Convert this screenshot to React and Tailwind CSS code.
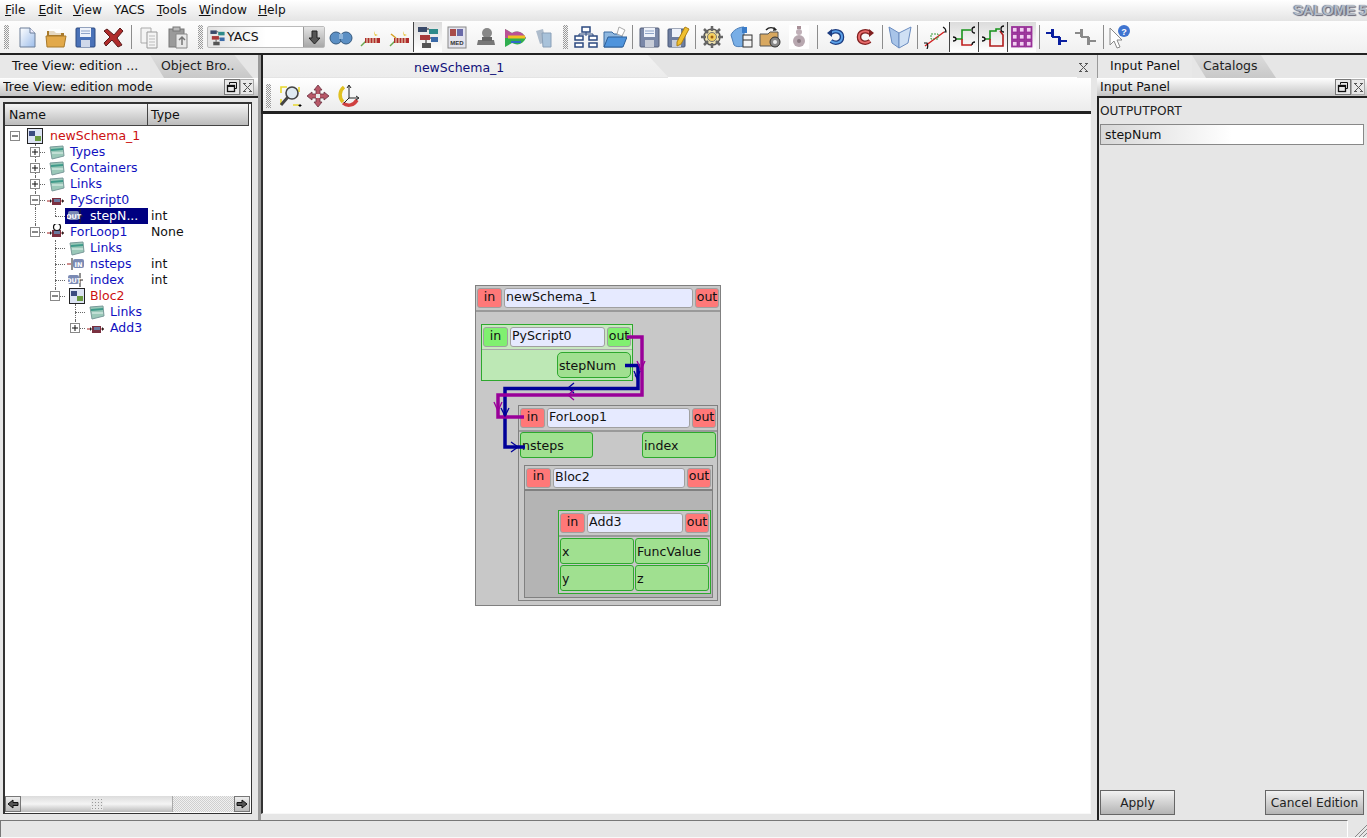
import React from "react";

// ---- toolbar icons, all drawn on a 24x24 box ----
const Svg = ({ children, size = 24 }) => (
  <svg width={size} height={size} viewBox="0 0 24 24" fill="none">
    {children}
  </svg>
);

const NewDoc = () => (
  <Svg>
    <defs>
      <linearGradient id="nd" x1="0" y1="0" x2="1" y2="1">
        <stop offset="0" stopColor="#ffffff" />
        <stop offset="1" stopColor="#9dbdea" />
      </linearGradient>
    </defs>
    <path d="M5 3h10l5 5v14H5z" fill="url(#nd)" stroke="#6d7f99" />
    <path d="M15 3v5h5" fill="#eef" stroke="#6d7f99" />
  </Svg>
);
const OpenFolder = () => (
  <Svg>
    <path d="M3 6h7l2 2h8v3H3z" fill="#a87a2c" />
    <path d="M2 11h20l-2 11H3z" fill="#e2a94a" stroke="#a87a2c" />
    <path d="M5 4h12v6H5z" fill="#fff" opacity=".7" />
  </Svg>
);
const SaveDisk = ({ dim }) => (
  <Svg>
    <rect x="3" y="3" width="19" height="19" rx="1" fill={dim ? "#7a88a8" : "#4a72b8"} stroke={dim ? "#555f78" : "#2c4a80"} />
    <rect x="7" y="3" width="11" height="9" fill="#eef2fa" />
    <path d="M8 6h9M8 8.5h9" stroke="#8fa4c8" />
    <rect x="8" y="15" width="9" height="7" fill={dim ? "#c8cdd8" : "#cfd8ea"} />
  </Svg>
);
const CloseX = () => (
  <Svg>
    <path d="M5 4l7 6 6-7 3 3-6 7 5 7-4 2-6-7-6 6-2-3 6-6-6-6z" fill="#b02c2c" stroke="#5a1c1c" />
  </Svg>
);
const CopyDocs = () => (
  <Svg>
    <path d="M4 3h10v15H4z" fill="#f4f4f4" stroke="#aaa" />
    <path d="M10 7h10v16H10z" fill="#f4f4f4" stroke="#999" />
    <path d="M12 11h6M12 14h6M12 17h6M12 20h6" stroke="#bbb" />
  </Svg>
);
const PasteDocs = () => (
  <Svg>
    <rect x="3" y="4" width="15" height="18" fill="#9a9a9a" stroke="#777" />
    <rect x="7" y="2" width="7" height="4" fill="#bbb" stroke="#777" />
    <path d="M10 9h11v14H10z" fill="#e8e8e8" stroke="#888" />
    <path d="M13 15l3-3 3 3M16 12v8" stroke="#777" strokeWidth="1.5" />
  </Svg>
);
const YacsIcon = ({ size = 24 }) => (
  <Svg size={size}>
    <rect x="2" y="2" width="9" height="5" fill="#3a4a6a" />
    <rect x="13" y="4" width="9" height="5" fill="#2e8a8a" />
    <rect x="4" y="10" width="10" height="5" fill="#a83a3a" />
    <rect x="15" y="12" width="7" height="5" fill="#3a6aa8" />
    <rect x="6" y="18" width="9" height="5" fill="#555" />
    <path d="M11 4h2M14 13h1M10 15v3" stroke="#222" />
  </Svg>
);
const Binoculars = () => (
  <Svg>
    <circle cx="7" cy="13" r="6" fill="#5b8fc4" stroke="#34597f" />
    <circle cx="17" cy="13" r="6" fill="#5b8fc4" stroke="#34597f" />
    <rect x="10" y="9" width="4" height="5" fill="#8fb5da" />
  </Svg>
);
const Wand = ({ dim }) => (
  <Svg>
    <path d="M3 21L9 15" stroke="#6aa84f" strokeWidth="1.5" />
    <path d="M7 13h15v5H7z" fill="#b02c2c" />
    <path d="M9 13v5M12 13v5M15 13v5M18 13v5" stroke="#eec" />
    <path d="M16 6l1 3 3 1-3 1-1-3z" fill="#e8c640" />
    {dim && <path d="M4 9l5 4" stroke="#d4a020" strokeWidth="1.5" />}
  </Svg>
);
const MedBook = () => (
  <Svg>
    <rect x="3" y="2" width="18" height="21" fill="#e4e4ee" stroke="#888" />
    <rect x="5" y="4" width="6" height="7" fill="#a84a4a" />
    <rect x="12" y="4" width="6" height="7" fill="#6a6aa8" />
    <text x="12" y="20" fontSize="6" fontFamily="Liberation Sans, sans-serif" textAnchor="middle" fill="#333" fontWeight="700">MED</text>
  </Svg>
);
const Stamp = () => (
  <Svg>
    <circle cx="13" cy="8" r="5" fill="#888" />
    <path d="M4 15h16l1 5H3z" fill="#777" />
    <path d="M8 12h10v4H8z" fill="#666" />
  </Svg>
);
const ColorFish = () => (
  <Svg>
    <path d="M2 4l7 4c6-3 11-1 14 5-3 6-8 8-14 5l-7 4z" fill="#2fae4f" />
    <path d="M2 4l7 4c6-3 11-1 14 5H2z" fill="#dd3aa8" opacity=".8" />
    <path d="M5 12h17" stroke="#f0c020" strokeWidth="3" />
    <path d="M8 17h10" stroke="#2f6ac8" strokeWidth="2" />
  </Svg>
);
const Cards = () => (
  <Svg>
    <path d="M4 6l7-2 3 13-6 2z" fill="#aebccc" />
    <path d="M10 8h9v14h-8z" fill="#a8c2da" stroke="#8aa0b8" />
  </Svg>
);
const TreeNet = () => (
  <Svg>
    <rect x="8" y="2" width="8" height="5" fill="#fff" stroke="#2c4a80" strokeWidth="1.5" />
    <rect x="1" y="11" width="8" height="4" fill="#fff" stroke="#2c4a80" strokeWidth="1.5" />
    <rect x="15" y="11" width="8" height="4" fill="#fff" stroke="#2c4a80" strokeWidth="1.5" />
    <rect x="1" y="18" width="8" height="4" fill="#fff" stroke="#2c4a80" strokeWidth="1.5" />
    <rect x="15" y="18" width="8" height="4" fill="#fff" stroke="#2c4a80" strokeWidth="1.5" />
    <path d="M12 7v4M5 9h14v2M5 9v2" stroke="#2c4a80" />
  </Svg>
);
const BlueFolder = () => (
  <Svg>
    <path d="M1 7h8l2 2h8v13H1z" fill="#8fb8e0" stroke="#3a6aa0" />
    <path d="M16 2l6 3-3 6-5-2z" fill="#fff" stroke="#aaa" />
    <path d="M5 12h19l-4 10H1z" fill="#4f94dc" stroke="#2c5f98" />
  </Svg>
);
const SaveDiskBody = () => (
  <>
    <rect x="2" y="4" width="17" height="18" rx="1" fill="#6e7ea0" stroke="#485878" />
    <rect x="6" y="4" width="9" height="8" fill="#eef2fa" />
    <rect x="6" y="15" width="9" height="7" fill="#c8cdd8" />
  </>
);
const SavePen = () => (
  <Svg>
    <SaveDiskBody />
    <path d="M19 2l4 2-8 15-4 2 0-4z" fill="#f0c030" stroke="#b08010" />
  </Svg>
);
const Gear = () => (
  <Svg>
    <circle cx="12" cy="12" r="8" fill="#f0e4b0" stroke="#555" strokeWidth="1.5" />
    <path d="M12 1v5M12 18v5M1 12h5M18 12h5M4 4l4 4M16 16l4 4M20 4l-4 4M8 16l-4 4" stroke="#666" strokeWidth="2.5" />
    <circle cx="12" cy="12" r="4.5" fill="#f4d060" stroke="#777" />
    <circle cx="12" cy="12" r="1.5" fill="#a06010" />
  </Svg>
);
const BlueWindow = () => (
  <Svg>
    <path d="M2 10c2-5 8-8 13-8v19c-5 1-8 1-10-1z" fill="#78aee6" stroke="#4d7fb8" />
    <rect x="13" y="2" width="5" height="6" fill="#3a7cc8" />
    <rect x="14" y="10" width="9" height="12" fill="#f4f4f4" stroke="#333" />
    <path d="M14 15h9" stroke="#333" />
  </Svg>
);
const FolderGear = () => (
  <Svg>
    <path d="M2 9h8l2-2h8v14H2z" fill="#d8a860" stroke="#555" />
    <path d="M8 5c3-3 7-3 10 0" stroke="#222" strokeWidth="1.5" />
    <path d="M16 2l3 3-4 1z" fill="#222" />
    <circle cx="17" cy="17" r="5" fill="#888" stroke="#333" />
    <circle cx="17" cy="17" r="2" fill="#eee" />
  </Svg>
);
const Bottle = () => (
  <Svg>
    <rect x="2" y="0" width="20" height="24" fill="#fff" />
    <circle cx="12" cy="16" r="6" fill="#b8a8b0" />
    <circle cx="12" cy="7" r="3" fill="#c0b0b8" />
    <rect x="10" y="1" width="4" height="3" fill="#a89098" />
    <circle cx="12" cy="16" r="2" fill="#8a7a82" />
  </Svg>
);
const UndoIcon = () => (
  <Svg>
    <path d="M7 8c4-3 11-2 11 4s-7 7-11 4" stroke="#1c3c80" strokeWidth="4.500" />
    <path d="M7 8c4-3 11-2 11 4s-7 7-11 4" stroke="#5aa0e8" strokeWidth="2" />
    <path d="M3 8l5-4v8z" fill="#1c3c80" />
  </Svg>
);
const RedoIcon = () => (
  <Svg>
    <path d="M17 8c-4-3-11-2-11 4s7 7 11 4" stroke="#802020" strokeWidth="4.500" />
    <path d="M17 8c-4-3-11-2-11 4s7 7 11 4" stroke="#e86a6a" strokeWidth="2" />
    <path d="M21 8l-5-4v8z" fill="#802020" />
  </Svg>
);
const BookIcon = () => (
  <Svg>
    <path d="M1 2l10 6v15L4 18z" fill="#a8c4e8" stroke="#6a8cc0" />
    <path d="M23 2l-12 6v15l9-5z" fill="#cfe0f4" stroke="#6a8cc0" />
  </Svg>
);
const Straight = () => (
  <Svg>
    <path d="M2 21L21 7" stroke="#d02020" strokeWidth="1.5" />
    <path d="M8 9h7v5H8z" stroke="#3a9a3a" strokeDasharray="2 1" />
    <path d="M1 18h3c1 2 1 4 0 6M20 2c2 1 3 3 3 5h-2" stroke="#111" strokeWidth="1.2" />
  </Svg>
);
const Ortho = () => (
  <Svg>
    <path d="M4 14h6V5h9" stroke="#18931c" strokeWidth="1.6" />
    <path d="M10 14v6h10" stroke="#c02020" strokeWidth="1.6" />
    <path d="M1 12c2 0 3 1 3 2s-1 2-3 2M23 2c-2 0-3 1-3 3s1 3 3 3M23 17c-2 0-3 1-3 3" stroke="#111" strokeWidth="1.3" />
  </Svg>
);
const OrthoBig = () => (
  <Svg>
    <path d="M4 14h5V6h6v-2h4" stroke="#18931c" strokeWidth="1.6" />
    <path d="M9 14v7h13V10l-3-4" stroke="#b01c1c" strokeWidth="1.6" />
    <path d="M1 12c2 0 3 1 3 2s-1 2-3 2M23 1c-2 0-3 1-3 3s1 3 3 3" stroke="#111" strokeWidth="1.3" />
  </Svg>
);
const GridIcon = () => (
  <Svg>
    {[2, 9, 16].map((y) =>
      [2, 9, 16].map((x) => (
        <rect key={`${x}-${y}`} x={x} y={y} width="5.5" height="5.5" fill="#f0d0f0" stroke="#983098" strokeWidth="1.8" />
      ))
    )}
  </Svg>
);
const LinkStep = ({ color }) => (
  <Svg>
    <path d="M1 8h7v4h6v4h8" stroke={color} strokeWidth="2" />
    <path d="M6 4h3v8H6zM13 12h3v8h-3z" fill={color} />
  </Svg>
);
const HelpArrow = () => (
  <Svg>
    <path d="M2 3v17l4-4 3 7 3-1-3-7h5z" fill="#fff" stroke="#888" />
    <circle cx="16" cy="6" r="6" fill="#3f74d0" />
    <text x="16" y="9.5" fontSize="9" fontWeight="700" fontFamily="Liberation Sans, sans-serif" textAnchor="middle" fill="#fff">?</text>
  </Svg>
);
const ZoomGlass = () => (
  <Svg>
    <path d="M3 9V3h6M3 15v6M21 3v5M21 21h-6" stroke="#e8d830" strokeWidth="1.6" />
    <circle cx="14" cy="9" r="6" fill="#dfeaf2" stroke="#444" strokeWidth="1.6" />
    <path d="M10 13l-7 8" stroke="#444" strokeWidth="3" />
    <path d="M22 20v3M20.5 21.5h3" stroke="#000" />
  </Svg>
);
const PanCross = () => (
  <Svg>
    <path d="M11 1l4 5h-2v4h4V8l5 4-5 4v-2h-4v4h2l-4 5-4-5h2v-4H5v2l-5-4 5-4v2h4V6H7z" fill="#b85868" stroke="#6a3040" strokeWidth=".8" />
    <rect x="9" y="10" width="4" height="4" fill="#e8e8e8" />
  </Svg>
);
const RotateIcon = () => (
  <Svg>
    <path d="M8 3C3 7 3 14 7 18" stroke="#e0c020" strokeWidth="3.500" />
    <path d="M7 19c5 4 11 2 14-3" stroke="#d04040" strokeWidth="3.500" />
    <path d="M13 2v12h9M13 14l-5 5" stroke="#222" />
    <path d="M11 4l2-3 2 3M20 12l3 2-3 2" stroke="#222" />
  </Svg>
);

// ---- toolbar pieces ----
const Grip = ({ className = "" }) => (
  <div className={`w-[5px] h-[24px] bg-[repeating-conic-gradient(#9a9a9a_0_25%,#f4f4f4_0_50%)] bg-[length:2px_2px] ${className}`} />
);

const Sep = ({ className = "" }) => <div className={`w-px h-[24px] bg-[#8c8c8c] ${className}`} />;

const Tool = ({ on, children }) => (
  <div
    className={`w-[29px] h-[30px] flex items-center justify-center shrink-0 ${
      on ? "border-l border-[#444] bg-linear-to-b from-[#dcdcdc] to-[#ffffff]" : ""
    }`}
  >
    {children}
  </div>
);

const Toolbar = () => (
  <div className="h-[32px] flex items-center bg-linear-to-b from-[#fdfdfd] to-[#f0f0f0]">
    <Grip className="ml-[4px] mr-[3px]" />
    <Tool><NewDoc /></Tool>
    <Tool><OpenFolder /></Tool>
    <Tool><SaveDisk /></Tool>
    <Tool><CloseX /></Tool>
    <Sep className="ml-[3px] mr-[2px]" />
    <Tool><CopyDocs /></Tool>
    <Tool><PasteDocs /></Tool>
    <Grip className="ml-[6px] mr-[4px]" />
    <div className="w-[118px] h-[22px] shrink-0 flex items-center bg-linear-to-r from-[#e4e4e4] via-white to-white border border-[#bbb] rounded-[2px] mr-px">
      <span className="w-[19px] flex justify-center"><YacsIcon size={17} /></span>
      <span className="flex-1 text-[12.500px]">YACS</span>
      <span className="w-[21px] h-full flex items-center justify-center bg-linear-to-b from-[#e4e4e4] to-[#a8a8a8] border-l border-[#999]">
        <svg width="13" height="15" viewBox="0 0 13 15">
          <path d="M4 1h5v7h3l-5.500 6L1 8h3z" fill="#555" stroke="#222" />
        </svg>
      </span>
    </div>
    <Tool><Binoculars /></Tool>
    <Tool><Wand /></Tool>
    <Tool><Wand dim /></Tool>
    <Tool on><YacsIcon /></Tool>
    <Tool><MedBook /></Tool>
    <Tool><Stamp /></Tool>
    <Tool><ColorFish /></Tool>
    <Tool><Cards /></Tool>
    <Grip className="ml-[5px] mr-[3px]" />
    <Tool><TreeNet /></Tool>
    <Tool><BlueFolder /></Tool>
    <Sep className="ml-[3px] mr-[1px]" />
    <Tool><SaveDisk dim /></Tool>
    <Tool><SavePen /></Tool>
    <Sep className="ml-[3px] mr-[1px]" />
    <Tool><Gear /></Tool>
    <Tool><BlueWindow /></Tool>
    <Tool><FolderGear /></Tool>
    <Tool><Bottle /></Tool>
    <Sep className="ml-[4px] mr-[3px]" />
    <Tool><UndoIcon /></Tool>
    <Tool><RedoIcon /></Tool>
    <Sep className="ml-[3px] mr-[2px]" />
    <Tool><BookIcon /></Tool>
    <Sep className="ml-[3px] mr-[2px]" />
    <Tool><Straight /></Tool>
    <Tool on><Ortho /></Tool>
    <Tool on><OrthoBig /></Tool>
    <Tool on><GridIcon /></Tool>
    <Sep className="ml-[3px] mr-[2px]" />
    <Tool><LinkStep color="#0a1fa0" /></Tool>
    <Tool><LinkStep color="#8a8a8a" /></Tool>
    <Sep className="ml-[3px] mr-[1px]" />
    <Tool><HelpArrow /></Tool>
  </div>
);

const MenuBar = () => (
  <div className="h-[21px] flex items-center bg-linear-to-b from-[#ffffff] to-[#e4e4e4] text-[12.200px] relative overflow-hidden">
    {[
      ["F", "ile", "ml-[5px]"],
      ["E", "dit", "ml-[13px]"],
      ["V", "iew", "ml-[11px]"],
      ["", "YACS", "ml-[12px]"],
      ["T", "ools", "ml-[12px]"],
      ["W", "indow", "ml-[12px]"],
      ["H", "elp", "ml-[11px]"],
    ].map(([key, rest, ml]) => (
      <span key={rest} className={ml}>
        <span className="underline">{key}</span>
        {rest}
      </span>
    ))}
    <span className="absolute right-0 top-[1px] whitespace-nowrap text-[15px] leading-[18px] tracking-[-0.4px] font-bold text-[#b4bcc6] [font-family:'Liberation_Sans',sans-serif] [text-shadow:1px_1px_1px_#667,-1px_0_1px_#667]">
      SALOME 5
    </span>
  </div>
);

// ---- dock pieces ----
const CloseMark = () => (
  <svg width="11" height="9" viewBox="0 0 11 9" fill="none" stroke="#555">
    <path d="M1 .5h3M7 .5h3M1 8.500h3M7 8.500h3M2 1l7 7M9 1L2 8" />
  </svg>
);

const DockTitle = ({ title, className = "" }) => (
  <div className={`h-[20px] flex items-center bg-linear-to-b from-[#ffffff] to-[#c4c4c4] border-b-2 border-[#222] text-[12.500px] ${className}`}>
    <span className="flex-1 truncate pt-px">{title}</span>
    <div className="w-[16px] h-[16px] border border-[#777] bg-[#e8e8e8] flex items-center justify-center">
      <svg width="12" height="12" viewBox="0 0 12 12" fill="none" stroke="#111">
        <path d="M3.500 3.500V1.500h7v6h-2" />
        <rect x="1.500" y="4.500" width="7" height="6" strokeWidth="1.300" />
        <path d="M1.500 5.500h7" />
      </svg>
    </div>
    <div className="w-[14px] h-[16px] border border-[#aaa] bg-[#e8e8e8] flex items-center justify-center">
      <CloseMark />
    </div>
  </div>
);

const Tab = ({ active, width, children }) => (
  <div
    className={`h-[23px] flex items-center shrink-0 text-[12.500px] ${width} ${
      active
        ? "bg-[#e8e8e8] pl-[12px] text-[#111]"
        : "bg-linear-to-b from-[#dcdcdc] to-[#c8c8c8] pl-[11px] text-[#222] [clip-path:polygon(0_0,82%_0,100%_100%,14px_100%)]"
    }`}
  >
    <span className="whitespace-nowrap">{children}</span>
  </div>
);

// ---- tree ----
const rows = [
  { d: 0, exp: "-", icon: "proc", text: "newSchema_1", red: true },
  { d: 1, exp: "+", icon: "folder", text: "Types", line: "tee" },
  { d: 1, exp: "+", icon: "folder", text: "Containers", line: "tee" },
  { d: 1, exp: "+", icon: "folder", text: "Links", line: "tee" },
  { d: 1, exp: "-", icon: "script", text: "PyScript0", line: "tee" },
  { d: 2, icon: "out", text: "stepN...", type: "int", line: "end", sel: true, guide: true },
  { d: 1, exp: "-", icon: "loop", text: "ForLoop1", type: "None", line: "end" },
  { d: 2, icon: "folder", text: "Links", line: "tee" },
  { d: 2, icon: "in", text: "nsteps", type: "int", line: "tee" },
  { d: 2, icon: "out", text: "index", type: "int", line: "tee" },
  { d: 2, exp: "-", icon: "proc", text: "Bloc2", red: true, line: "end" },
  { d: 3, icon: "folder", text: "Links", line: "tee" },
  { d: 3, exp: "+", icon: "script", text: "Add3", line: "end" },
];

const TreeIcon = ({ kind }) => {
  if (kind === "folder")
    return (
      <svg width="16" height="16" viewBox="0 0 16 16">
        <path d="M1 3l13-1 1 10-12 3z" fill="#9ac8b8" stroke="#7a9a9a" />
        <path d="M2 5l12-1v2L2 7z" fill="#3f9a8a" />
        <path d="M3 9h11" stroke="#e8f4f0" />
      </svg>
    );
  if (kind === "proc")
    return (
      <svg width="16" height="16" viewBox="0 0 16 16">
        <rect x=".5" y=".5" width="15" height="15" fill="#dde4f4" stroke="#222" />
        <rect x="2" y="3" width="6" height="5" fill="#3c4c80" />
        <rect x="8" y="8" width="6" height="5" fill="#6a9a40" />
      </svg>
    );
  if (kind === "script" || kind === "loop")
    return (
      <svg width="18" height="16" viewBox="0 0 18 16">
        <path d="M0 9h4M14 9h3" stroke="#a02020" />
        <path d="M3 7l2 2-2 2zM15 7l2 2-2 2z" fill="#222" />
        <rect x="5" y="6" width="9" height="7" fill="#7a3040" />
        <rect x="7" y="7" width="6" height="3" fill="#6a7aa0" />
        {kind === "loop" && <circle cx="10" cy="3" r="3.500" fill="#fff" stroke="#111" strokeWidth="1.200" />}
      </svg>
    );
  return (
    <svg width="18" height="16" viewBox="0 0 18 16">
      {kind === "in" && <path d="M0 8h4" stroke="#a02020" />}
      {kind === "in" && <path d="M5 2v12" stroke="#222" />}
      <rect x={kind === "in" ? 6 : 1} y="3" width="11" height="9" rx="2" fill="#7a8ab4" />
      {kind === "out" && <path d="M12 8h4M13 1v14" stroke="#222" />}
      <text x={kind === "in" ? 11.5 : 6.5} y="10.500" fontSize="6.500" fontWeight="700" fill="#fff" textAnchor="middle" fontFamily="DejaVu Sans, sans-serif">
        {kind === "in" ? "IN" : "OUT"}
      </text>
    </svg>
  );
};

const Expander = ({ sign }) => (
  <div className="absolute left-[5px] top-[3px] w-[10px] h-[10px] border border-[#888] bg-white flex items-center justify-center">
    <svg width="8" height="8" viewBox="0 0 8 8" stroke="#111">
      <path d="M1 4h6" />
      {sign === "+" && <path d="M4 1v6" />}
    </svg>
  </div>
);

const Guide = ({ mode }) => (
  <div className="relative w-[20px] h-4 shrink-0">
    {mode && (
      <div className={`absolute left-[10px] top-0 border-l border-dotted border-[#666] ${mode === "end" ? "h-[8px]" : "h-4"}`} />
    )}
    {mode && mode !== "v" && <div className="absolute left-[10px] top-[8px] w-[10px] border-t border-dotted border-[#666]" />}
  </div>
);

const TreeRow = ({ row }) => {
  const color = row.red ? "text-[#cc1010]" : "text-[#1010c0]";
  return (
    <div className="h-4 flex text-[12.500px] leading-4">
      <div className="w-[143px] shrink-0 flex overflow-hidden">
        {row.d > 0 && <Guide />}
        {row.d > 1 && <Guide mode={row.guide ? "v" : undefined} />}
        {row.d > 2 && <Guide />}
        <div className="relative w-[20px] h-4 shrink-0">
          {row.line && <Guide mode={row.line} />}
          {row.exp && <Expander sign={row.exp} />}
        </div>
        <div className={`flex ${row.sel ? "bg-[#000080] text-white w-[83px]" : color}`}>
          <div className={`w-[20px] h-4 shrink-0 flex items-center ${row.d > 0 ? "justify-end" : "justify-center"}`}>
            <TreeIcon kind={row.icon} />
          </div>
          <span className="pl-[5px] whitespace-nowrap">{row.text}</span>
        </div>
      </div>
      {row.type && <span className="pl-[3px] text-[#111]">{row.type}</span>}
    </div>
  );
};

const ArrowBtn = ({ flip }) => (
  <div className="w-[16px] h-[16px] bg-linear-to-b from-[#eeeeee] to-[#bbbbbb] border border-[#777] flex items-center justify-center">
    <svg width="12" height="10" viewBox="0 0 12 10" className={flip ? "rotate-180" : ""}>
      <path d="M1 5l5-4v2.500h5v3H6V9z" fill="#555" stroke="#111" />
    </svg>
  </div>
);

const LeftDock = () => (
  <div className="w-[258px] shrink-0 flex flex-col">
    <div className="flex">
      <Tab active width="w-[150px]">Tree View: edition ...</Tab>
      <Tab width="w-[103px]">Object Bro..</Tab>
    </div>
    <DockTitle title="Tree View: edition mode" className="pl-[3px] pr-[4px]" />
    <div className="flex-1 mt-[4px] mb-[6px] ml-[3px] mr-[6px] border-l-2 border-t-2 border-[#333] border-r border-b bg-white flex flex-col min-h-0">
      <div className="h-[22px] flex text-[12.500px] shrink-0">
        <div className="w-[143px] flex items-center pl-[4px] pt-[2px] bg-linear-to-b from-[#f4f4f4] to-[#bcbcbc] border-r border-b border-[#444]">Name</div>
        <div className="w-[101px] flex items-center pl-[3px] pt-[2px] bg-linear-to-b from-[#f4f4f4] to-[#bcbcbc] border-r border-b border-[#444]">Type</div>
      </div>
      <div className="flex-1 pt-[2px]">
        {rows.map((row, i) => (
          <TreeRow key={i} row={row} />
        ))}
      </div>
      <div className="h-[16px] flex mr-px mb-px">
        <ArrowBtn />
        <div className="w-[152px] bg-linear-to-b from-[#dcdcdc] via-[#f4f4f4] to-[#bbbbbb] border-r border-[#aaa] flex items-center justify-center">
          <div className="w-[12px] h-[12px] bg-[radial-gradient(#999_1px,#e8e8e8_1px)] bg-[length:3px_3px]" />
        </div>
        <div className="flex-1 bg-[repeating-conic-gradient(#cfcfcf_0_25%,#f0f0f0_0_50%)] bg-[length:2px_2px]" />
        <ArrowBtn flip />
      </div>
    </div>
  </div>
);

// ---- schema canvas ----
const Btn = ({ color, w, children }) => (
  <div className={`${w} h-[20px] pb-[2px] shrink-0 rounded-[3px] border border-[#a0a0a0] ${color} flex items-center justify-center text-[12.600px] text-[#111]`}>
    {children}
  </div>
);

const NodeHead = ({ title, portColor = "bg-[#ff7878]", inW = "w-[25px]", outW = "w-[24px]", className = "" }) => (
  <div className={`flex items-center gap-[2px] px-[1px] shrink-0 ${className}`}>
    <Btn color={portColor} w={inW}>in</Btn>
    <div className="flex-1 h-[20px] rounded-[3px] border border-[#a0a0a0] bg-[#e6eaff] pl-px text-[12.600px] leading-[16px] text-[#111]">
      {title}
    </div>
    <Btn color={portColor} w={outW}>out</Btn>
  </div>
);

const Port = ({ className = "", children }) => (
  <div className={`h-[26px] rounded-[3px] border border-[#2ea82e] bg-[#a0e090] pl-px pt-[2px] flex items-center text-[12.600px] text-[#111] ${className}`}>
    {children}
  </div>
);

const Wires = () => (
  <svg className="absolute left-0 top-0 w-[826px] h-[698px] pointer-events-none" viewBox="263 114 826 698" fill="none">
    <path d="M625 365.500H638V388.500H505V447H525" stroke="#000098" strokeWidth="3.500" />
    <path d="M627 337H642V395H498V417H524" stroke="#990099" strokeWidth="3.500" />
    <path d="M634 371l3 7 3-7M635 375l2 3 2-3" stroke="#000098" strokeWidth="1.300" />
    <path d="M637 361l4 9 4-9" stroke="#990099" strokeWidth="1.300" />
    <path d="M574 383l-6 5 6 5" stroke="#000098" strokeWidth="1.300" />
    <path d="M574 390l-6 5 6 5" stroke="#990099" strokeWidth="1.300" />
    <path d="M494 402l4 9 4-9" stroke="#990099" strokeWidth="1.300" />
    <path d="M501 408l4 8 4-8" stroke="#000098" strokeWidth="1.300" />
    <path d="M511 442l7 5-7 5" stroke="#000098" strokeWidth="1.300" />
  </svg>
);

const Schema = () => (
  <>
    <div className="absolute left-[212px] top-[171px] w-[246px] h-[321px] bg-[#c8c8c8] border border-[#808080]">
      <div className="h-[26px] flex items-center border-b-2 border-[#9a9a9a]">
        <NodeHead title="newSchema_1" className="w-full" />
      </div>

      <div className="absolute left-[5px] top-[38px] w-[152px] h-[57px] border border-[#2ea82e] bg-[#bde8b5] flex flex-col">
        <div className="h-[25px] flex items-center border-b border-[#a8a8a8] bg-[#c8e8c0]">
          <NodeHead title="PyScript0" portColor="bg-[#80f070]" className="w-full" />
        </div>
        <div className="flex justify-end pt-[2px] pr-px">
          <Port className="w-[74px] bg-[#80dc70] border-[#1e7a1e] rounded-[5px]">stepNum</Port>
        </div>
      </div>

      <div className="absolute left-[42px] top-[119px] w-[200px] h-[196px] border border-[#808080] flex flex-col">
        <div className="h-[26px] flex items-center border-b-2 border-[#9a9a9a]">
          <NodeHead title="ForLoop1" className="w-full" />
        </div>
        <div className="flex justify-between px-px">
          <Port className="w-[73px]">nsteps</Port>
          <Port className="w-[74px]">index</Port>
        </div>
        <div className="mt-[7px] ml-[5px] mr-[4px] flex-1 mb-[2px] border border-[#808080] flex flex-col">
          <div className="h-[25px] flex items-center border-b-2 border-[#808080] shrink-0">
            <NodeHead title="Bloc2" className="w-full" />
          </div>
          <div className="flex-1 bg-[#b4b4b4] pt-[19px] pl-[33px]">
            <div className="w-[153px] h-[84px] border border-[#2ea82e] bg-[#c8c8c8] flex flex-col">
              <div className="h-[26px] flex items-center border-b-2 border-[#9a9a9a]">
                <NodeHead title="Add3" className="w-full" />
              </div>
              <div className="grid grid-cols-2 gap-px px-px mt-px">
                <Port>x</Port>
                <Port>FuncValue</Port>
                <Port>y</Port>
                <Port>z</Port>
              </div>
            </div>
          </div>
        </div>
      </div>
    </div>
    <Wires />
  </>
);

const CenterPane = () => (
  <div className="flex-1 min-w-0 flex flex-col border-l-[3px] border-[#9a9a9a]">
    <div className="h-[23px] relative shrink-0 bg-[#e4e4e4] border-l-2 border-[#222]">
      <div className="h-[22px] w-[405px] bg-linear-to-b from-[#f2f2f2] to-[#ececec] flex items-center pl-[151px] pt-[5px] text-[12.500px] text-[#10107a] [clip-path:polygon(0_0,95%_0,100%_100%,0_100%)]">
        newSchema_1
      </div>
      <div className="absolute left-[405px] right-[20px] bottom-0 h-px bg-white" />
      <div className="absolute left-[815px] top-[8px]"><CloseMark /></div>
    </div>
    <div className="h-[36px] shrink-0 flex items-center pt-[2px] border-l-2 border-[#222] border-b-[3px] border-b-[#222] bg-linear-to-b from-[#ffffff] to-[#ececec] mr-[6px]">
      <Grip className="ml-[3px] mr-[4px]" />
      <div className="w-[29px] flex justify-center"><ZoomGlass /></div>
      <div className="w-[29px] flex justify-center"><PanCross /></div>
      <div className="w-[29px] flex justify-center"><RotateIcon /></div>
    </div>
    <div className="relative flex-1 min-h-0 bg-white border-l-2 border-[#333] mr-[6px] mb-[6px] border-r border-b border-r-[#f8f8f8] border-b-[#f8f8f8]">
      <Schema />
    </div>
  </div>
);

const PushBtn = ({ w, children }) => (
  <div className={`${w} h-[25px] pt-[2px] flex items-center justify-center text-[12.200px] text-[#222] bg-linear-to-b from-[#f2f2f2] to-[#b4b4b4] border border-[#666]`}>
    {children}
  </div>
);

const RightDock = () => (
  <div className="w-[270px] shrink-0 flex flex-col">
    <div className="flex border-l border-[#999]">
      <Tab active width="w-[94px]">Input Panel</Tab>
      <Tab width="w-[84px]">Catalogs</Tab>
    </div>
    <DockTitle title="Input Panel" className="pl-[3px] pr-[2px]" />
    <div className="flex-1 flex flex-col border-l-2 border-[#222] pl-[1px] pr-[3px] pb-[5px] min-h-0">
      <div className="text-[12.200px] pt-[4px] h-[26px] text-[#222]">OUTPUTPORT</div>
      <div className="h-[21px] border border-[#888] bg-linear-to-r from-[#d8d8d8] via-white to-white text-[12.500px] pl-[4px] leading-[19px]">stepNum</div>
      <div className="flex-1" />
      <div className="flex justify-between">
        <PushBtn w="w-[75px]">Apply</PushBtn>
        <PushBtn w="w-[99px]">Cancel Edition</PushBtn>
      </div>
    </div>
  </div>
);

const StatusBar = () => (
  <div className="h-[18px] shrink-0 flex border-b border-[#f8f8f8]">
    <div className="w-[1348px] border-t border-l border-[#777] border-r-white border-r" />
    <div className="flex-1 relative overflow-hidden">
      <svg className="absolute right-0 bottom-0" width="14" height="14" viewBox="0 0 14 14" stroke="#888">
        <path d="M14 2L2 14M14 6L6 14M14 10L10 14" />
      </svg>
    </div>
  </div>
);

export default function App() {
  return (
    <div className="w-[1367px] h-[838px] flex flex-col overflow-hidden bg-[#e6e6e6] text-[#111] [font-family:'DejaVu_Sans',sans-serif]">
      <MenuBar />
      <Toolbar />
      <div className="h-[2px] bg-[#222] shrink-0" />
      <div className="flex-1 min-h-0 flex">
        <LeftDock />
        <CenterPane />
        <RightDock />
      </div>
      <StatusBar />
    </div>
  );
}
